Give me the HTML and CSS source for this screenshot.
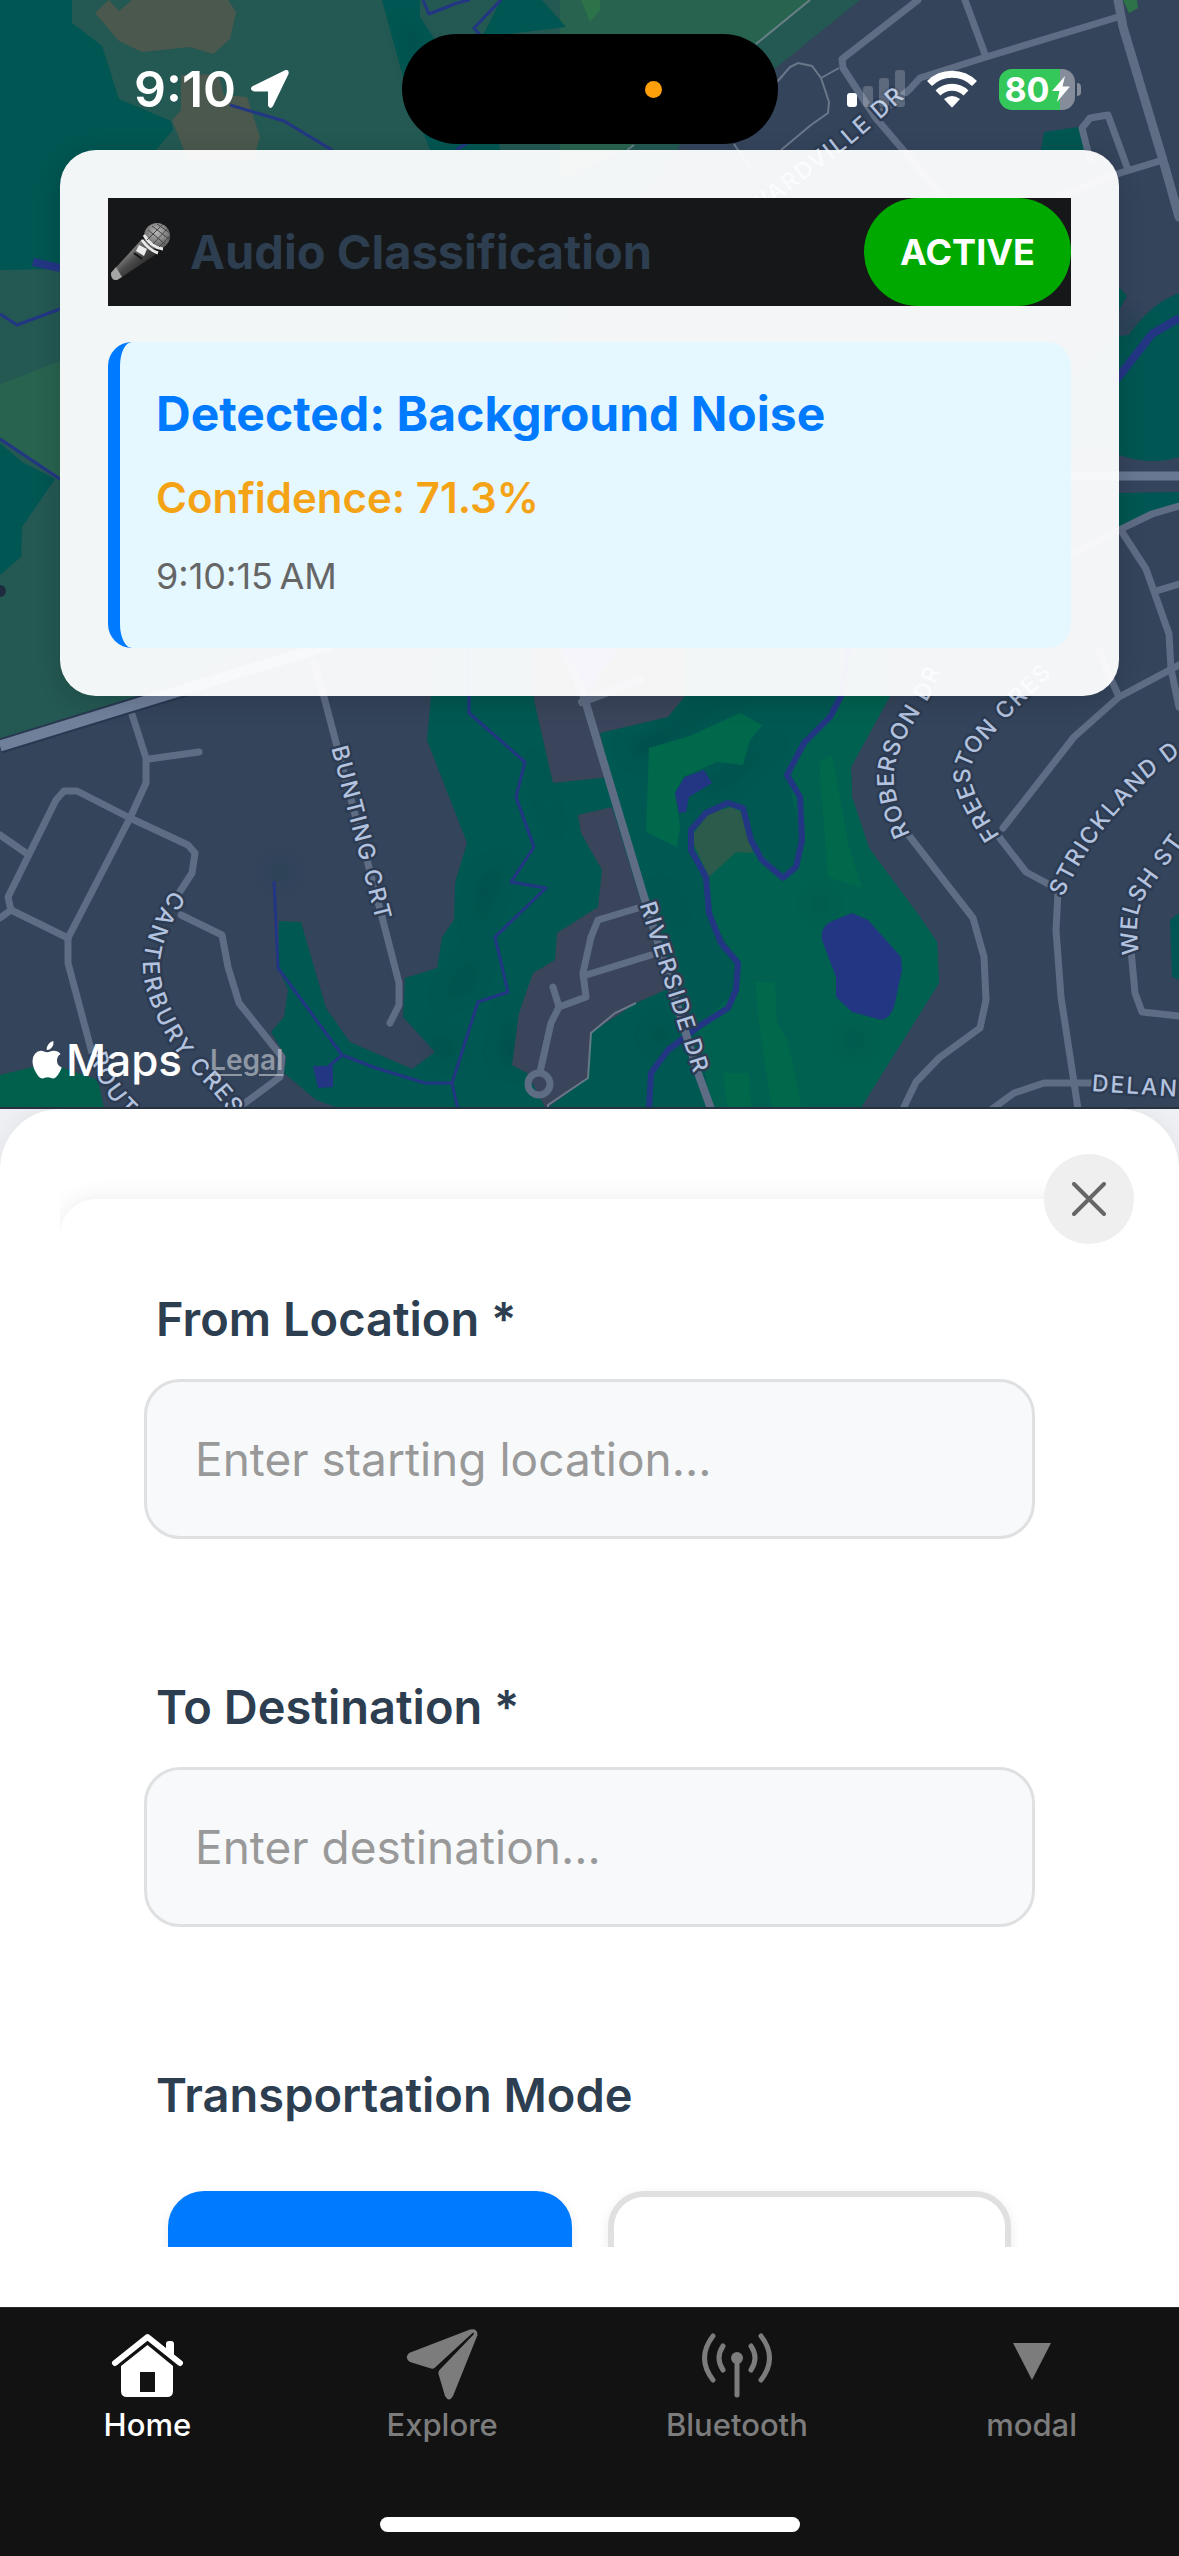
FILE: index.html
```html
<!DOCTYPE html>
<html lang="en">
<head>
<meta charset="utf-8">
<meta name="viewport" content="width=device-width, initial-scale=1">
<title>Home</title>
<link rel="stylesheet" href="styles.css">
</head>
<body>
<div class="app">
  <section class="map" aria-label="Map">
    <svg class="map-canvas" viewBox="0 0 1179 1109" preserveAspectRatio="xMidYMin slice" aria-hidden="true">
      <defs>
        <filter id="soft" x="-50%" y="-50%" width="200%" height="200%"><feGaussianBlur stdDeviation="9"/></filter>
        <path id="p-ard" d="M722 230L778 190L850 135L925 70"/>
        <path id="p-bunting" d="M339 746L386 927"/>
        <path id="p-cant" d="M179 894C166 914 152 938 151 966C151 990 166 1022 183 1047C198 1070 222 1084 240 1116"/>
        <path id="p-rout" d="M98 1052Q106 1090 140 1118"/>
        <path id="p-river" d="M647 902L708 1092"/>
        <path id="p-delan" d="M1092 1083L1210 1091"/>
        <path id="p-rober" d="M903 838Q884 796 886 772C889 742 908 718 926 687L940 650"/>
        <path id="p-free" d="M993 840C978 815 961 792 962 770C966 745 990 728 1007 707L1060 655"/>
        <path id="p-strick" d="M1056 894C1070 860 1095 825 1114 804L1148 768L1210 722"/>
        <path id="p-welsh" d="M1131 955C1128 925 1126 905 1148 878L1200 806"/>
      </defs>
      <rect width="1179" height="1109" fill="#34445b"/>

      <g fill="#005652">
        <path fill="#245852" d="M0 0H860L777 67L681 144L560 330L400 560L166 696L0 745Z"/>
        <path fill="#28634f" d="M560 0H811L634 145L560 180Z"/>
        <path fill="#28634f" d="M0 384L60 361V479L0 437Z"/>
        <path d="M0 0H72V23L102 46L119 99L171 121L173 130L130 180L60 269L0 270Z"/>
        <path d="M382 0L403 77L430 150H500L482 37L437 43L420 17V0Z"/>
        <path d="M501 0H542L566 27L482 37Z"/>
        <path d="M0 443L22 462L55 479L22 527L21 557L0 575Z"/>
        <path d="M1041 150L1044 132L1078 127L1090 150Z"/>
        <path d="M1119 287L1127 296L1119 310Z"/>
        <path d="M1050 400L1119 336L1129 335Q1150 304 1179 293V457Q1152 466 1119 455L1050 440Z"/>
        <path d="M1119 493L1179 492V504L1119 528Z"/>
        <path d="M1170 920L1179 913V980L1172 977Z"/>
      </g>
      <path fill="#2d7349" d="M1123 0H1137L1138 8L1129 13ZM581 0H600V10L590 22Z"/>
      <g fill="#4b584e">
        <path d="M109 0L95 13L119 41L142 52L190 47L213 54L230 39L236 12L228 0Z"/>
        <path d="M181 75L218 74L224 95L247 97L260 137L253 160H188L172 120L181 110Z"/>
      </g>
      <path fill="#245852" d="M109 0L119 11L132 0Z"/>
      <path fill="#00604c" d="M0 1075L49 1063L98 1080L104 1109H0Z"/>

      <path fill="#005852" d="M440 600L431 696L427 740L467 843L455 883L454 920L442 937L437 968L405 978L403 1017L435 1052L412 1069L350 1042L326 1008L301 922L279 921L278 967L288 990L284 1017L271 1032L286 1057L284 1073L316 1100L341 1109H860L939 983L937 942L920 917L869 848L852 797L851 767L890 696V600Z"/>
      <path fill="#006150" d="M841 696L804 743L787 775L802 840L796 867L783 878L751 840L743 808L728 803L706 813L691 830V850L706 877L709 913L738 963L736 990L698 1027L711 1109H860L939 983L937 942L920 917L869 848L852 797L851 767L890 696Z"/>
      <g fill="#003f42" opacity=".42" filter="url(#soft)">
        <path d="M505 860L475 940L480 880ZM530 740L560 850L545 790ZM625 745L680 720L740 700L680 735L640 760Z"/>
        <path d="M740 760L780 740L720 790L690 800ZM655 880L690 930L660 890Z"/>
        <circle cx="820" cy="905" r="7"/><circle cx="1130" cy="325" r="9"/><circle cx="855" cy="1040" r="8"/><circle cx="660" cy="1035" r="9"/><circle cx="280" cy="872" r="8"/>
        <path d="M510 1000L520 1070L500 1060ZM430 1030L460 1050L440 1060ZM480 950L440 1000L470 990ZM400 20L420 40V90Z"/>
      </g>
      <g fill="#3a455b">
        <path d="M534 600V700L553 783L610 777L600 733L668 717L685 696V600Z"/>
        <path d="M578 815L581 833L602 870L598 907L557 933L555 960L533 973L519 1013L512 1065L527 1073L546 1109L588 1078L591 1033L636 1003L672 987L662 970L612 807Z"/>
      </g>
      <g fill="#00694b">
        <path d="M649 748L690 736L740 713L762 725L749 742L743 765L717 762L683 777L675 793L680 827L677 847L646 832Z"/>
        <path d="M819 762L832 755L849 847L862 888L828 877Z"/>
        <path d="M755 982H775L777 1023L788 1042L802 1109H772L760 1030ZM723 1073H749L751 1109H728Z"/>
      </g>
      <path fill="#2c5b4b" d="M694 833L709 813L732 807L743 813L753 853L736 852L709 877L694 845Z"/>
      <g fill="#233684">
        <path d="M830 922L852 913L868 920L901 957L902 970L894 1007Q888 1022 878 1019L852 1012L836 997V977L822 940Q820 928 830 922Z"/>
        <path d="M685 777L704 770L712 783L689 797L686 812L679 813L675 793Z"/>
        <path d="M313 1066H333V1087L318 1088Z"/>
      </g>
      <g fill="none" stroke="#233684" stroke-width="3" stroke-linejoin="round">
        <path d="M230 105L284 121L332 150M423 0L429 14L457 3L470 0M501 0L474 28L480 35M467 143L456 150M0 314L17 325L60 309M0 439L60 479"/>
        <path d="M469 640V713L525 762L516 797L534 847L511 882L546 888L495 937L508 992L478 1002L452 1083L458 1109"/>
        <path d="M274 881L278 968L342 1055L376 1068L425 1083H452M342 1055L327 1068"/>
        <path stroke-width="6" d="M850 640L841 696L830 717L804 743L787 775L800 797L802 840L796 867L783 878L762 860L751 840L743 808L728 803L706 813L691 830V850L706 877L709 913L721 943L738 963L736 990L728 1008L698 1027L668 1050L651 1073L649 1109"/>
        <path stroke-width="8" d="M33 262L60 268M1110 388L1152 334L1179 318"/>
      </g>

      <g fill="none" stroke="#5e6c84" stroke-width="7" stroke-linejoin="round" stroke-linecap="round">
        <path d="M918 0L842 59L843 68L875 117L950 205M965 0L986 57M1118 17L986 57L920 78L909 90L875 117"/>
        <path stroke-width="9" d="M1118 0L1123 27L1165 167L1179 217"/>
        <path d="M1090 160L1082 128L1090 118L1108 115L1127 167M1050 200L1120 173L1163 160"/>
        <path stroke="#687892" stroke-width="9" d="M700 476H1179"/>
        <path d="M1060 560L1119 530L1152 514L1179 506M1122 532L1146 569L1169 634L1171 669L1179 707M1156 591L1179 584"/>
        <path d="M1179 665L1119 697L1074 737L1003 828M1098 650L1119 697"/>
        <path d="M999 837L1026 872L1050 885L1058 893L1056 930L1061 997L1078 1109"/>
        <path d="M907 833L973 918L984 957L986 1000L980 1028L939 1058L916 1082L903 1109"/>
        <path d="M992 1109L1014 1093L1044 1083H1100M1131 950L1135 993L1142 1012L1179 1016"/>
        <path stroke-width="8" d="M560 640L584 697L645 900L698 1073L711 1109M582 702L640 680"/>
        <path d="M638 908L598 920L591 937L583 973L586 997L559 1007L551 1023L540 1072M553 987L559 1007M651 955L583 976"/>
        <circle cx="539" cy="1084" r="11"/>
        <path d="M130 708L146 758V783L130 818L68 938V963L92 1053M149 759L199 752M0 835L26 853"/>
        <path d="M179 893L192 873L195 853L188 845L130 818L77 791H64L56 800L8 897L11 910L68 938M11 910L0 918"/>
        <path d="M181 915L222 935L228 967L239 1003L282 1057L280 1077L245 1103"/>
        <path d="M310 650L324 697L382 917L399 983V1005L390 1023"/>
      </g>
      <g fill="none">
        <path stroke="#293850" stroke-width="15" d="M0 746L166 695L330 645"/>
        <path stroke="#70809b" stroke-width="11" d="M0 746L166 695L330 645"/>
        <path stroke="#7c8a98" stroke-opacity=".75" stroke-width="2" d="M810 0L756 44M634 145L627 150M777 82L790 67L798 63L812 66L821 78L829 102L828 113L811 125L781 150M821 78L839 68M734 144L750 168M636 1003L615 1013L591 1033L588 1078L548 1105V1109"/>
      </g>
      <path fill="#5148c8" d="M560 645H620L589 690Z"/>
      <circle cx="0" cy="591" r="6" fill="#1f2c40"/>

      <g class="street">
        <text dy="8"><textPath href="#p-ard">EDWARDVILLE DR</textPath></text>
        <text dy="8"><textPath href="#p-bunting">BUNTING CRT</textPath></text>
        <text dy="8"><textPath href="#p-cant">CANTERBURY CRES</textPath></text>
        <text dy="8"><textPath href="#p-rout">ROUT</textPath></text>
        <text dy="8"><textPath href="#p-river">RIVERSIDE DR</textPath></text>
        <text dy="8"><textPath href="#p-delan">DELAN</textPath></text>
        <text dy="8"><textPath href="#p-rober">ROBERSON DR</textPath></text>
        <text dy="8"><textPath href="#p-free">FREESTON CRES</textPath></text>
        <text dy="8"><textPath href="#p-strick">STRICKLAND D</textPath></text>
        <text dy="8"><textPath href="#p-welsh">WELSH ST</textPath></text>
      </g>
    </svg>

    <header class="status">
      <div class="status-left">
        <span class="clock">9:10</span>
        <svg width="40" height="40" viewBox="0 0 40 40" aria-hidden="true"><path fill="#fff" d="M35 1.200Q39.500 0 38.500 5L23 37Q20 41 18 36.500V22.500H4Q-1 21 2 17.500Z"/></svg>
      </div>
      <div class="island"><span class="mic-dot"></span></div>
      <div class="status-right">
        <svg width="58" height="38" viewBox="0 0 58 38" aria-hidden="true"><g fill="#fff"><rect y="23" width="10" height="14" rx="3"/><g opacity=".2"><rect x="16" y="16" width="10" height="21" rx="3"/><rect x="32" y="8" width="10" height="29" rx="3"/><rect x="48" width="10" height="37" rx="3"/></g></g></svg>
        <svg width="50" height="38" viewBox="0 0 50 38" aria-hidden="true"><g fill="none" stroke="#fff" stroke-width="7"><path d="M2.500 13.500A32 32 0 0 1 47.500 13.500"/><path d="M11 23A20 20 0 0 1 39 23"/></g><path fill="#fff" d="M17 29Q25 23 33 29L25.700 37Q25 37.600 24.300 37Z"/></svg>
        <div class="battery"><span class="battery-level">80</span><svg width="18" height="26" viewBox="0 0 18 26" aria-hidden="true"><path fill="#fff" d="M13 0L0 15H7.500L5 26L18 10.500H10.500Z"/></svg></div>
      </div>
    </header>

    <article class="card">
      <div class="card-head">
        <h1 class="card-title">
          <svg width="64" height="60" viewBox="0 0 64 60" aria-hidden="true">
            <defs>
              <linearGradient id="body" x1="0" y1="0" x2="1" y2="1"><stop offset=".3" stop-color="#8c8c8c"/><stop offset=".5" stop-color="#4a4a4a"/><stop offset=".75" stop-color="#232323"/></linearGradient>
              <radialGradient id="head" cx=".5" cy=".35" r=".65"><stop stop-color="#b9b9b9"/><stop offset="1" stop-color="#575757"/></radialGradient>
            </defs>
            <path fill="url(#body)" d="M34 17L50 31L11 57Q3 60 3 51Z"/>
            <path fill="#a5a5a5" d="M3 51L8 45L14 55L9 58Q3 59 3 51Z"/>
            <path fill="#ececec" d="M31 23L39 27L36 34L28 29Z"/>
            <path fill="none" stroke="#151515" stroke-width="2" d="M26 31L34 37"/>
            <circle cx="49" cy="14" r="13" fill="url(#head)"/>
            <path fill="none" stroke="#e8e8e8" stroke-width="3" d="M36 13Q44 26 55 27M34 18Q41 28 50 31"/>
            <path fill="none" stroke="#444" stroke-width="1" d="M40 8L57 22M44 4L61 17M49 2L62 11M39 18L55 2M45 22L60 6M51 25L62 14"/>
          </svg>
          Audio Classification
        </h1>
        <span class="badge">ACTIVE</span>
      </div>
      <div class="result">
        <p class="detected">Detected: Background Noise</p>
        <p class="confidence">Confidence: 71.3%</p>
        <p class="time">9:10:15&#8201;AM</p>
      </div>
    </article>

    <footer class="attribution">
      <svg width="30" height="38" viewBox="0 0 30 38" aria-hidden="true"><path fill="#fff" d="M21.500 0Q22 4 19.600 6.800Q17.300 9.300 14.600 9.100Q14.300 5.800 16.600 3Q18.500.700 21.500 0ZM28.500 13Q25 15.200 25 19.500Q25 24.500 29.700 26.600Q28.500 30.300 26 33.800Q23.600 37.500 21 37.500C19.200 37.500 18 36.300 15.700 36.300C13.300 36.300 12.200 37.500 10.500 37.500Q7.800 37.500 5 33.200Q.500 26.500.500 20Q.500 15.500 3 12.700Q5.500 9.800 8.900 9.800C11.400 9.800 12.900 11.300 15.200 11.300C17.300 11.300 18.800 9.700 21.800 9.700Q26 9.700 28.500 13Z"/></svg>
      <span class="maps-name">Maps</span>
      <a class="legal" href="#legal">Legal</a>
    </footer>
  </section>

  <div class="sheet-wrap">
    <main class="sheet">
      <button class="close" type="button" aria-label="Close"><svg width="34" height="34" viewBox="0 0 34 34" aria-hidden="true"><path d="M2 2L32 32M32 2L2 32" stroke="#666" stroke-width="4" stroke-linecap="round"/></svg></button>
      <div class="scroller">
        <form class="panel">
          <div class="field">
            <label class="label" for="from">From Location *</label>
            <input class="input" id="from" type="text" placeholder="Enter starting location...">
          </div>
          <div class="field">
            <label class="label" for="to">To Destination *</label>
            <input class="input" id="to" type="text" placeholder="Enter destination...">
          </div>
          <div class="field" role="group" aria-labelledby="mode">
            <span class="label" id="mode">Transportation Mode</span>
            <div class="modes">
              <button class="mode mode-on" type="button" aria-labelledby="mode" aria-pressed="true"></button>
              <button class="mode" type="button" aria-labelledby="mode" aria-pressed="false"></button>
            </div>
          </div>
        </form>
      </div>
    </main>
  </div>

  <nav class="tabs">
    <div class="tab-row">
      <a class="tab tab-on" href="#home">
        <svg width="72" height="72" viewBox="0 0 72 72" aria-hidden="true"><path fill="none" stroke="currentColor" stroke-width="6" stroke-linecap="round" stroke-linejoin="round" d="M4 34L36.500 8L69 34"/><path fill="currentColor" d="M55 25V15Q55 12 58 12H60Q63 12 63 15V31Z"/><path fill="currentColor" fill-rule="evenodd" d="M36.500 16L62 37V62Q62 68 56 68H16Q10 68 10 62V37ZM29 43V63H44V43Z"/></svg>
        Home
      </a>
      <a class="tab" href="#explore">
        <svg width="72" height="72" viewBox="0 0 72 72" aria-hidden="true"><path fill="currentColor" d="M64 .600Q71.500-1 71.500 6L47 67Q43 74 39 67L32.500 45Q32 43 33.500 41L67.500 5.500Q69 3 66.500 4L28.500 39Q27 40 25 39.500L4 33Q-2 29 3 24Z"/></svg>
        Explore
      </a>
      <a class="tab" href="#bluetooth">
        <svg width="72" height="72" viewBox="0 0 72 72" aria-hidden="true"><circle cx="36" cy="29" r="6" fill="currentColor"/><path fill="none" stroke="currentColor" stroke-width="5" stroke-linecap="round" d="M36 29V66M22 17Q14 29 22 41M12 7Q-5 29 12 51M50 17Q58 29 50 41M60 7Q77 29 60 51"/></svg>
        Bluetooth
      </a>
      <a class="tab" href="#modal">
        <svg width="72" height="72" viewBox="0 0 72 72" aria-hidden="true"><path fill="currentColor" d="M17 14H55L36 51Z"/></svg>
        modal
      </a>
    </div>
    <div class="home-bar"></div>
  </nav>
</div>
</body>
</html>
```
FILE: styles.css
```css
* { box-sizing: border-box; }

body {
  margin: 0;
  font-family: Inter, "Liberation Sans", sans-serif;
  background: #121212;
}

h1, p { margin: 0; }
svg { display: block; flex: none; }

.app {
  display: grid;
  grid-template-rows: minmax(0, 1109fr) minmax(0, 1198fr) auto;
  height: 100vh;
}

/* Map */
.map {
  position: relative;
  display: flex;
  flex-direction: column;
  overflow: hidden;
  border-bottom: 2px solid #26323f;
}

.map-canvas {
  position: absolute;
  inset: 0;
  width: 100%;
  height: 100%;
}

.street text {
  font-size: 23px;
  font-weight: 500;
  letter-spacing: 2px;
  fill: #b3c2de;
  stroke: #2c3b52;
  stroke-width: 5px;
  stroke-linejoin: round;
  paint-order: stroke;
}

.status {
  position: relative;
  display: grid;
  grid-template-columns: 1fr auto 1fr;
  align-items: center;
  padding: 34px 0 6px;
}

.status-left {
  display: flex;
  align-items: center;
  gap: 14px;
  padding-left: 134px;
}

.clock {
  font-size: 50px;
  font-weight: 600;
  line-height: 60px;
  color: #fff;
}

.island {
  display: flex;
  align-items: center;
  justify-content: flex-end;
  width: 376px;
  height: 110px;
  padding-right: 116px;
  border-radius: 55px;
  background: #000;
}

.mic-dot {
  width: 17px;
  height: 17px;
  border-radius: 50%;
  background: #ff9f0a;
}

.status-right {
  display: flex;
  align-items: center;
  justify-content: flex-end;
  gap: 22px;
  padding-right: 104px;
}

.battery {
  position: relative;
  display: flex;
  align-items: center;
  justify-content: center;
  gap: 2px;
  width: 76px;
  height: 41px;
  border-radius: 13px;
  background: linear-gradient(90deg, #34c759 80%, #858d9a 80%);
}

.battery::after {
  content: "";
  position: absolute;
  left: 100%;
  top: 14px;
  width: 4px;
  height: 13px;
  margin-left: 2px;
  border-radius: 0 4px 4px 0;
  background: #858d9a;
}

.battery-level {
  font-size: 34px;
  font-weight: 700;
  line-height: 41px;
  color: #fff;
}

.card {
  position: relative;
  margin: 0 60px;
  padding: 48px;
  border-radius: 36px;
  background: rgba(255, 255, 255, .95);
  box-shadow: 0 6px 24px rgba(0, 0, 0, .15);
}

.card-head {
  display: flex;
  align-items: stretch;
  justify-content: space-between;
  height: 108px;
  background: #161718;
}

.card-title {
  display: flex;
  align-items: center;
  gap: 18px;
  font-size: 47px;
  font-weight: 700;
  line-height: 60px;
  color: #2c3e50;
}

.badge {
  display: flex;
  align-items: center;
  padding: 0 36px;
  border-radius: 54px;
  background: #00a900;
  color: #fff;
  font-size: 36px;
  font-weight: 700;
}

.result {
  margin-top: 36px;
  padding: 42px 36px 48px;
  border-left: 12px solid #007aff;
  border-radius: 24px;
  background: #e5f7ff;
}

.detected {
  font-size: 48px;
  font-weight: 700;
  line-height: 60px;
  color: #007aff;
}

.confidence {
  margin-top: 24px;
  font-size: 42px;
  font-weight: 600;
  line-height: 60px;
  color: #f5a316;
}

.time {
  margin-top: 24px;
  font-size: 36px;
  line-height: 48px;
  color: #666;
}

.attribution {
  position: relative;
  display: flex;
  align-items: center;
  gap: 4px;
  margin-top: auto;
  padding: 0 32px 20px;
}

.maps-name {
  font-size: 44px;
  font-weight: 500;
  line-height: 54px;
  color: #fff;
}

.legal {
  margin-left: 24px;
  font-size: 28px;
  font-weight: 600;
  color: rgba(205, 208, 214, .6);
  text-underline-offset: 4px;
}

/* Bottom sheet */
.sheet-wrap {
  background: #eef0f3;
  overflow: hidden;
}

.sheet {
  position: relative;
  height: 100%;
  padding: 60px;
  border-radius: 60px 60px 0 0;
  background: #fff;
  box-shadow: 0 0 24px rgba(0, 0, 0, .06);
}

.close {
  position: absolute;
  z-index: 1;
  top: 45px;
  right: 45px;
  display: grid;
  place-items: center;
  width: 90px;
  height: 90px;
  padding: 0;
  border: 0;
  border-radius: 50%;
  background: #efefef;
}

.scroller {
  height: 100%;
  overflow: hidden;
}

.panel {
  display: flex;
  flex-direction: column;
  gap: 140px;
  margin-top: 30px;
  padding: 90px 84px;
  border-radius: 36px;
  background: #fff;
  box-shadow: 0 0 24px rgba(0, 0, 0, .08);
}

.label {
  display: block;
  padding-left: 12px;
  font-size: 47px;
  font-weight: 600;
  line-height: 60px;
  color: #2c3e50;
}

.input {
  display: block;
  width: 100%;
  height: 160px;
  margin-top: 30px;
  padding: 0 48px;
  border: 3px solid #dfe0e1;
  border-radius: 36px;
  background: #f8f9fb;
  font: 46px Inter, "Liberation Sans", sans-serif;
  color: #2c3e50;
}

.field + .field { margin-top: -2px; }

.input::placeholder { color: #999; opacity: 1; }

.modes {
  display: grid;
  grid-template-columns: 1fr 1fr;
  gap: 36px;
  padding: 66px 24px 0;
}

.mode {
  height: 160px;
  border: 6px solid #e0e0e0;
  border-radius: 36px;
  background: #fff;
  box-shadow: 0 3px 12px rgba(0, 0, 0, .08);
}

.mode-on {
  border-color: #007aff;
  background: #007aff;
}

/* Tab bar */
.tabs {
  padding: 21px 0 24px;
  border-top: 1px solid #2b2b2b;
  background: #121212;
}

.tab-row {
  display: grid;
  grid-template-columns: repeat(4, 1fr);
}

.tab {
  display: flex;
  flex-direction: column;
  align-items: center;
  gap: 6px;
  font-size: 31px;
  font-weight: 500;
  line-height: 36px;
  color: #7c7c7d;
  text-decoration: none;
}

.tab-on { color: #fff; }

.home-bar {
  width: 420px;
  height: 15px;
  margin: 74px auto 0;
  border-radius: 8px;
  background: #fff;
}
```
